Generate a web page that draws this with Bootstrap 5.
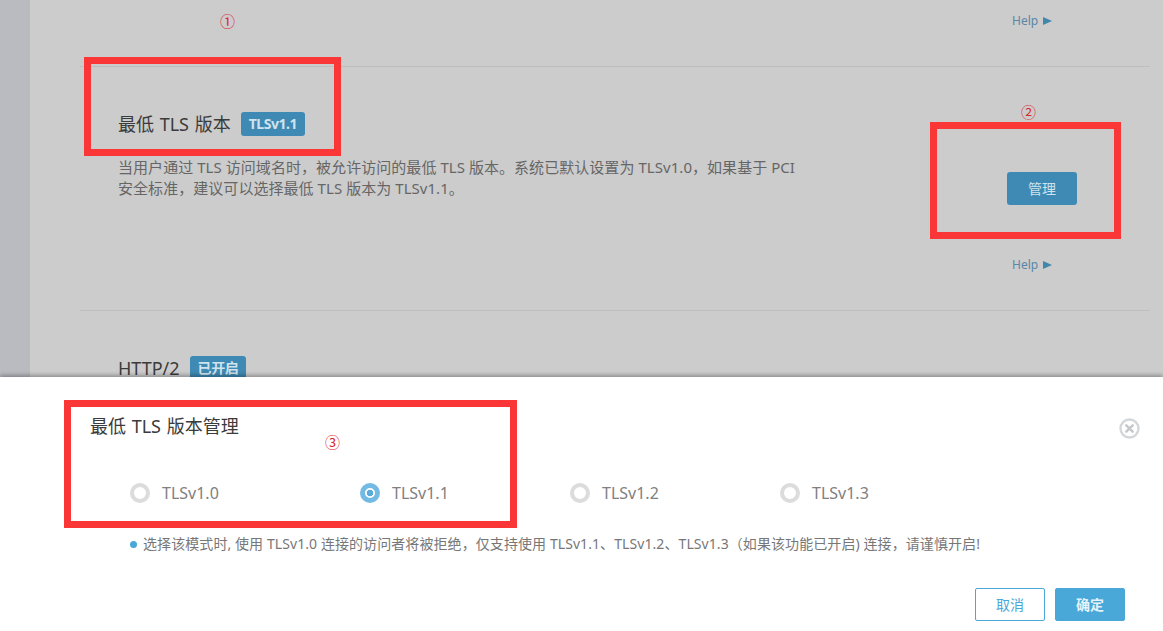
<!doctype html>
<html lang="zh-CN">
<head>
<meta charset="utf-8">
<title>最低 TLS 版本</title>
<link href="https://cdn.jsdelivr.net/npm/bootstrap@5.3.0/dist/css/bootstrap.min.css" rel="stylesheet">
<style>
html,body{height:631px;overflow:hidden;}
body{font-family:"Noto Sans","Noto Sans CJK SC",sans-serif;background:#ccc;color:#444;}
.shell{height:631px;position:relative;overflow:hidden;}
.side-rail{width:30px;background:#b9bbc1;flex:none;}
.main-pane{flex:1;padding:0 13px 0 50px;background:#ccc;min-width:0;}
.top-rest{height:67px;border-bottom:1px solid #bfbfbf;padding-top:12px;}
.help-col{width:143px;flex:none;padding-left:5px;}
.help-link{font-size:12px;line-height:17px;color:#5a87a8;text-decoration:none;display:flex;align-items:center;gap:5px;}
.help-link i{display:block;width:0;height:0;border-left:9px solid #3f87ad;border-top:4.5px solid transparent;border-bottom:4.5px solid transparent;}
.feature{height:244px;border-bottom:1px solid #bfbfbf;padding-left:38px;}
.feature-text{width:690px;padding-top:45px;}
.feature-title{font-size:18px;line-height:24px;color:#3b3b3b;font-weight:400;word-spacing:1px;margin:0 0 21px;display:flex;align-items:center;gap:10px;}
.tag-blue{background:#3f8ab4;color:#cfe3ee;font-size:14px;font-weight:700;line-height:24px;height:24px;padding:0 8px;border-radius:3px;letter-spacing:-.45px;}
.feature-desc{font-size:15px;line-height:21px;color:#666;letter-spacing:.05px;margin:0;width:690px;}
.feature-side{margin-left:auto;width:143px;padding-top:105px;}
.manage-btn{display:block;width:70px;height:33px;padding:0;background:#3f8ab4;border:0;border-radius:3px;color:#cfe3ee;font-size:14px;line-height:33px;}
.side-help{margin:51px 0 0 5px;}
.drawer{position:absolute;left:0;right:0;bottom:0;height:254px;background:#fff;box-shadow:0 -2px 4px rgba(0,0,0,.3);padding:37px 38px 0 90px;}
.drawer-title{font-size:18px;line-height:24px;color:#3b3b3b;font-weight:400;word-spacing:1px;margin:0;}
.close-ico{position:absolute;left:1119px;top:41px;width:21px;height:21px;}
.tls-options{margin:44px 0 0 40px;}
.tls-item{width:210px;gap:12px;margin:0;}
.tls-item:first-child{width:230px;}
.tls-item label{font-size:16px;line-height:22px;color:#808080;}
.tls-radio.form-check-input{width:20px;height:20px;margin:0;border:4px solid #dcdcdc;background:#fff;box-shadow:none;flex:none;float:none;}
.tls-radio.form-check-input:checked{border:5px solid #74bbe4;background-color:#fff;background-image:radial-gradient(circle,#5aaadb 0,#5aaadb 3px,#fff 3.6px);}
.tls-note{font-size:14px;line-height:18px;color:#777;letter-spacing:.08px;margin:31px 0 0 40px;gap:6px;white-space:nowrap;}
.note-dot{width:7px;height:7px;border-radius:50%;background:#4aa8d8;flex:none;}
.drawer-actions{margin-top:35px;gap:10px;}
.act-btn{width:70px;height:33px;padding:0;font-size:14px;line-height:31px;border-radius:2px;border:1px solid #4aa8d8;}
.act-cancel{background:#fff;color:#4aa8d8;}
.act-ok{background:#4aa8d8;color:#e4f3fb;font-weight:700;}
.mark-box{position:absolute;border:7px solid #fb3637;pointer-events:none;}
.box-a{left:84px;top:57px;width:257px;height:99px;}
.box-b{left:930px;top:122px;width:191px;height:117px;}
.box-c{left:64px;top:400px;width:453px;height:128px;}
.mark-num{position:absolute;color:#d9262c;font-size:15px;line-height:16px;font-family:"Noto Sans CJK SC",sans-serif;}
.num-a{left:220px;top:13px;}
.num-b{left:1021px;top:104px;}
.num-c{left:325px;top:434px;}
</style>
</head>
<body>
<div class="shell d-flex">
  <div class="side-rail"></div>
  <div class="main-pane">
    <div class="top-rest d-flex justify-content-end">
      <div class="help-col"><a class="help-link" href="#">Help <i></i></a></div>
    </div>
    <section class="feature d-flex">
      <div class="feature-text">
        <h5 class="feature-title">最低 TLS 版本 <span class="tag-blue">TLSv1.1</span></h5>
        <p class="feature-desc">当用户通过 TLS 访问域名时，被允许访问的最低 TLS 版本。系统已默认设置为 TLSv1.0，如果基于 PCI 安全标准，建议可以选择最低 TLS 版本为 TLSv1.1。</p>
      </div>
      <div class="feature-side">
        <button type="button" class="btn manage-btn">管理</button>
        <div class="side-help"><a class="help-link" href="#">Help <i></i></a></div>
      </div>
    </section>
    <section class="feature d-flex">
      <div class="feature-text">
        <h5 class="feature-title">HTTP/2 <span class="tag-blue">已开启</span></h5>
      </div>
    </section>
  </div>

  <div class="drawer">
    <h5 class="drawer-title">最低 TLS 版本管理</h5>
    <svg class="close-ico" viewBox="0 0 21 21" aria-label="关闭"><circle cx="10.5" cy="10.5" r="9" fill="none" stroke="#d3d7da" stroke-width="2.4"/><path d="M7.3 7.3l6.4 6.4M13.700 7.300l-6.400 6.400" stroke="#c3c8cc" stroke-width="2.400" stroke-linecap="round"/></svg>
    <div class="tls-options d-flex">
      <div class="tls-item d-flex align-items-center"><input class="form-check-input tls-radio" type="radio" name="tls" id="t10"><label for="t10">TLSv1.0</label></div>
      <div class="tls-item d-flex align-items-center"><input class="form-check-input tls-radio" type="radio" name="tls" id="t11" checked><label for="t11">TLSv1.1</label></div>
      <div class="tls-item d-flex align-items-center"><input class="form-check-input tls-radio" type="radio" name="tls" id="t12"><label for="t12">TLSv1.2</label></div>
      <div class="tls-item d-flex align-items-center"><input class="form-check-input tls-radio" type="radio" name="tls" id="t13"><label for="t13">TLSv1.3</label></div>
    </div>
    <div class="tls-note d-flex align-items-center"><span class="note-dot"></span><span>选择该模式时, 使用 TLSv1.0 连接的访问者将被拒绝，仅支持使用 TLSv1.1、TLSv1.2、TLSv1.3（如果该功能已开启) 连接，请谨慎开启!</span></div>
    <div class="drawer-actions d-flex justify-content-end">
      <button type="button" class="btn act-btn act-cancel">取消</button>
      <button type="button" class="btn act-btn act-ok">确定</button>
    </div>
  </div>

  <div class="mark-box box-a"></div>
  <div class="mark-box box-b"></div>
  <div class="mark-box box-c"></div>
  <span class="mark-num num-a">①</span>
  <span class="mark-num num-b">②</span>
  <span class="mark-num num-c">③</span>
</div>
<script src="https://cdn.jsdelivr.net/npm/bootstrap@5.3.0/dist/js/bootstrap.bundle.min.js"></script>
</body>
</html>
